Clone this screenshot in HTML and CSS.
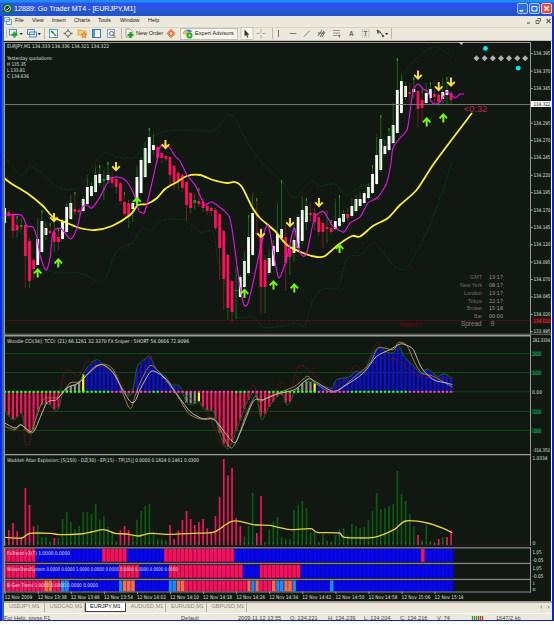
FILE: index.html
```html
<!DOCTYPE html>
<html lang="en">
<head>
<meta charset="utf-8">
<title>12889: Go Trader MT4 - [EURJPY,M1]</title>
<link rel="stylesheet" href="styles.css">
</head>
<body>
<div class="window">
  <header class="title">
    <svg class="logo" width="9" height="9" viewBox="0 0 9 9"><rect width="9" height="9" rx="1" fill="#0b7a2a"/><circle cx="4.5" cy="4.5" r="3" fill="#102818" stroke="#b8e8b0"/><path d="M3 4.5l1.2 1.3L6.3 3.4" stroke="#fff" fill="none"/></svg>
    <span class="title-text">12889: Go Trader MT4 - [EURJPY,M1]</span>
    <div class="win-buttons">
      <svg width="11" height="11" viewBox="0 0 11 11"><rect x=".5" y=".5" width="10" height="10" rx="1.5" fill="#2f6fe0" stroke="#a9c8ff"/><path d="M2.5 7.8h3.5" stroke="#fff" stroke-width="1.6"/></svg>
      <svg width="11" height="11" viewBox="0 0 11 11"><rect x=".5" y=".5" width="10" height="10" rx="1.5" fill="#2f6fe0" stroke="#a9c8ff"/><path d="M3 3.5h5v4.5h-5z" stroke="#fff" fill="none"/></svg>
      <svg width="11" height="11" viewBox="0 0 11 11"><rect x=".5" y=".5" width="10" height="10" rx="1.5" fill="#ee4a35" stroke="#ffc4b8"/><path d="M3.2 3.2l4.6 4.6M7.8 3.2L3.2 7.8" stroke="#fff" stroke-width="1.3"/></svg>
    </div>
  </header>
  <nav class="menu">
    <svg class="doc" width="8" height="8" viewBox="0 0 8 8"><path d="M.5.5h5v4h-5zM2.5 2.5h5v5h-5z" fill="#fff" stroke="#6c9bd6"/></svg>
    <span class="m1">File</span><span class="m2">View</span><span class="m3">Insert</span><span class="m4">Charts</span><span class="m5">Tools</span><span class="m6">Window</span><span class="m7">Help</span>
    <svg class="mdi" width="26" height="8" viewBox="0 0 26 8"><path d="M1 6h3" stroke="#666" stroke-width="1.2"/><path d="M11.5 1.5h3v3M10 3.5h3v3h-3z" stroke="#666" fill="none"/><path d="M20.5 2l4 4M24.5 2l-4 4" stroke="#666" stroke-width="1.2"/></svg>
  </nav>
  <div class="toolbar">
    <svg class="tools-left" width="132" height="13" viewBox="3 0 132 13">
      <path d="M5.5 2v9M43.5 1v11M120.500 1v11" stroke="#bdb9a8"/>
      <rect x="8.500" y="2.500" width="7" height="5.500" fill="#fff" stroke="#5a8ccc"/><path d="M13.500 4.500v6M10.500 7.500h6" stroke="#17a31f" stroke-width="2.200"/><path d="M18.500 6h3.400l-1.700 2zM36.500 6h3.400l-1.700 2z" fill="#222"/>
      <path d="M26.500 2.500h7v5h-7zM28.500 5h7v5h-7z" fill="#dbe9fb" stroke="#5a8ccc"/>
      <rect x="48.500" y="2.500" width="8" height="8" fill="#f6fbff" stroke="#5a9ad6"/><path d="M50 4l3 2.500" stroke="#16a32a" stroke-width="1.700"/><path d="M53 7l2 2" stroke="#e03a2a" stroke-width="1.500"/>
      <circle cx="67" cy="6.500" r="2.500" fill="none" stroke="#777"/><path d="M67 2v2.600M67 8.400V11M62.500 6.500h2.600M69 6.500h2.600" stroke="#777" stroke-width="1.300"/>
      <path d="M77 3h3l1 1h4v4h-8z" fill="#f8d66a" stroke="#c79a2a" stroke-width=".7"/><path d="M83 5l1 2 2 .3-1.500 1.500.4 2-1.900-1-1.900 1 .4-2L80 7.300 82 7z" fill="#ffae2b" stroke="#d8442a" stroke-width=".5"/>
      <rect x="91.500" y="2.500" width="8" height="8" fill="#f2f8ff" stroke="#3a76bc"/><rect x="92" y="3" width="2" height="7" fill="#5a93d6"/>
      <rect x="106.500" y="2.500" width="7" height="8" fill="#e4effa" stroke="#7fa6d2"/><circle cx="110.500" cy="6.500" r="2" fill="#fff" stroke="#667"/><path d="M112 8l2.500 2.500" stroke="#c79a2a" stroke-width="1.200"/>
      <path d="M125 2h4l2 2v6h-6z" fill="#fff" stroke="#777" stroke-width=".7"/><path d="M129.500 5v6M126.500 8h6" stroke="#17a31f" stroke-width="2.200"/>
    </svg>
    <span class="new-order">New Order</span>
    <svg class="alert" width="10" height="11" viewBox="0 0 10 11"><path d="M5 1l4.300 4.500L5 10 .7 5.500z" fill="#f2a565" stroke="#d77a3a" stroke-width=".7"/><circle cx="5" cy="5.500" r="2" fill="#f8e0b0" stroke="#b0402a" stroke-width=".8"/></svg>
    <div class="expert"><svg width="11" height="11" viewBox="0 0 11 11"><path d="M1 6C1 1 9 0 10 4z" fill="#3a86dc"/><path d="M1 5l3-3 4 3-3 3z" fill="#f0c23a"/><circle cx="7.500" cy="7.500" r="3" fill="#19a82c"/><path d="M6.700 5.900v3.200l2.400-1.600z" fill="#fff"/></svg><span>Expert Advisors</span></div>
    <svg class="tools-right" width="155" height="13" viewBox="238 0 155 13">
      <rect x="241" y=".5" width="12" height="12" fill="#f8f6ee" stroke="#bdb9a8" stroke-width=".7"/>
      <path d="M244.500 2.500v7l1.600-1.500 1.400 2.800 1-.6-1.300-2.500h2.200z" fill="#333"/>
      <path d="M261 2v3.500M261 8v3.500M256.500 6.500h3.500M262 6.500h3.500" stroke="#aaa"/>
      <path d="M272.500 1v11M391.500 1v11" stroke="#bdb9a8"/>
      <path d="M278.500 3v7M289.500 6.500h7M304 9.500l6-6" stroke="#777" fill="none"/>
      <path d="M318 9l4-6M320 10l4-6M322 10l3-5M318 6h6" stroke="#666"/><path d="M333 3.500h7M333 6h7M333 8.500h4" stroke="#999"/><path d="M338 8l2.500 0-1.200 3z" fill="#666"/>
      <path d="M362 3h7v7h-7z" fill="none" stroke="#999" stroke-width=".7" stroke-dasharray="1 1"/>
      <text x="349" y="9.200" class="glyph">A</text><text x="363.500" y="9.200" class="glyph">T</text>
      <path d="M377 3l3 1.500-2 2zM380 5l3 4" fill="#555" stroke="#555"/><circle cx="383" cy="9" r="1.200" fill="#555"/><path d="M385 6h3.400l-1.700 2z" fill="#222"/>
    </svg>
  </div>
  <main class="charts">
    <svg id="price" width="548" height="294" viewBox="4 41 548 294"></svg>
    <svg id="cci" width="548" height="119" viewBox="4 335 548 119"></svg>
    <svg id="boom" width="548" height="92.500" viewBox="4 454 548 92.500"></svg>
    <svg id="trend" width="548" height="54" viewBox="4 546.500 548 54"></svg>
  </main>
  <div class="tabs">
    <span>USDJPY,M1</span><span>USDCAD,M1</span><span class="active">EURJPY,M1</span><span>AUDUSD,M1</span><span>EURUSD,M1</span><span>GBPUSD,M1</span>
    <svg width="14" height="8" viewBox="0 0 14 8"><path d="M4 2L2 4l2 2zM10 2l2 2-2 2z" fill="#aaa"/></svg>
  </div>
  <footer class="status">
    <span class="s1">For Help, press F1</span><span class="s2">Default</span><span class="s3">2009.11.12 13:55</span><span class="s4">O: 134.221</span><span class="s5">H: 134.239</span><span class="s6">L: 134.204</span><span class="s7">C: 134.216</span><span class="s8">V: 74</span>
    <svg class="s9" width="13" height="6" viewBox="0 0 13 6"><path d="M1.500 0v6M3.500 0v6M5.500 0v6" stroke="#3d9a2d" stroke-width="1.300"/><path d="M7.500 0v6M9.500 0v6M11.500 0v6" stroke="#a8402c" stroke-width="1.300"/></svg>
    <span class="s10">1647/2 kb</span>
  </footer>
</div>
<script src="charts.js"></script>
</body>
</html>
```
FILE: styles.css
```css
* { box-sizing: border-box; }
body { margin: 0; background: #fff; font-family: "Liberation Sans", Arial, sans-serif; font-size: 5.6px; line-height: 1; color: #333; overflow: hidden; }
svg { display: block; flex: none; }
.window { width: 554px; height: 621px; padding: 0 2px 1px 4px; background: linear-gradient(90deg, #0a28e8 0 2px, #3b6f8e 2px 4px, #0a22e0 4px); display: flex; flex-direction: column; }
.title { height: 15.500px; margin: 0 -2px 0 -4px; padding: 1px 2px 0 3px; display: flex; align-items: center; background: linear-gradient(#1f8cf8 0 2px, #2b52ea 3px 9px, #1c5cb4 13px, #2450d8 15px); color: #fff; }
.title-text { margin-left: 2px; font-size: 7.200px; letter-spacing: -.03px; white-space: nowrap; }
.win-buttons { margin-left: auto; display: flex; gap: 1px; }
.menu { height: 11px; background: #ece9dc; display: flex; align-items: center; font-size: 5.500px; color: #222; }
.menu span { flex: none; }
.doc { margin-right: 3px; }
.m1 { width: 17px; } .m2 { width: 20px; } .m3 { width: 22px; } .m4 { width: 24px; } .m5 { width: 22px; } .m6 { width: 28px; }
.mdi { margin-left: auto; }
.toolbar { height: 14.500px; background: #ece9dc; border-top: 1px solid #d8d4c4; border-bottom: 1px solid #c5c1b0; display: flex; align-items: center; color: #222; }
.new-order { width: 30px; font-size: 5.600px; white-space: nowrap; }
.alert { margin-right: 4px; }
.expert { width: 58px; height: 12px; display: flex; align-items: center; gap: 2px; padding-left: 1px; background: #f6f4ec; border: 1px solid #c5c1b0; font-size: 5.600px; white-space: nowrap; }
.glyph { font-size: 6.500px; font-weight: bold; fill: #666; }
.charts { background: #111811; height: 559.500px; width: 548px; border-right: 1px solid #f4f4f4; overflow: hidden; }
.charts text { font-family: "DejaVu Sans", sans-serif; font-size: 5.100px; fill: #dce0dc; }
.charts .time { fill: #a0a0a0; }
.charts .city { fill: #7a6c74; font-size: 5.400px; font-family: "Liberation Sans", sans-serif; }
.charts .spread { fill: #8a8288; font-size: 7px; font-family: "Liberation Sans", sans-serif; }
.charts .countdown { fill: #c01c50; font-size: 9px; font-family: "Liberation Sans", sans-serif; }
.charts .level { fill: #24b838; }
.charts .now { fill: #111; }
.charts .warn { fill: #e84040; }
.charts .dim { fill: #6a0018; font-weight: bold; }
.charts .small { font-size: 4.400px; }
.tabs { height: 12px; flex: none; background: #ece9dc; border-top: 2px solid #aaa69a; display: flex; align-items: flex-start; color: #8b887c; font-size: 5.600px; }
.tabs span { width: 40.500px; height: 9px; padding: 1.500px 0 0 5px; border-right: 1px solid #b4b0a2; white-space: nowrap; }
.tabs .active { background: #fff; color: #111; border: 1px solid #444; border-top: 0; padding-left: 4px; }
.tabs svg { margin-left: auto; }
.status { flex: 1; background: #ece9dc; border-top: 1px solid #fff; display: flex; overflow: hidden; padding-top: 2px; font-size: 5.600px; color: #444; white-space: nowrap; }
.status > * { flex: none; }
.s1 { width: 177px; } .s2 { width: 57px; } .s3 { width: 52px; } .s4 { width: 38px; } .s5 { width: 36px; } .s6 { width: 36px; } .s7 { width: 37px; } .s8 { width: 34px; }
.s9 { margin-right: 12px; }
```
FILE: charts.js
```js
const NS = "http://www.w3.org/2000/svg";
const barX = i => 4.67 + 4.133 * i;

function el(svg, name, attrs, text) {
  const n = document.createElementNS(NS, name);
  for (const k in attrs) n.setAttribute(k, attrs[k]);
  if (text !== undefined) n.textContent = text;
  svg.appendChild(n);
  return n;
}
const rect = (s, x, y, w, h, fill) => el(s, "rect", { x, y, width: w, height: h, fill });
const line = (s, pts, stroke, w, dash) => el(s, "polyline", { points: pts, fill: "none", stroke, "stroke-width": w || 1, "stroke-dasharray": dash || "none", "stroke-linejoin": "round" });
const label = (s, x, y, w, t, cls) => el(s, "text", { x, y, textLength: w, lengthAdjust: "spacingAndGlyphs", class: cls || "" }, t);
const pairs = str => str.trim().split(/\s+/).map(p => p.split(",").map(Number));
const third = (str, y0) => pairs(str).map(([x, y]) => [x / 3, y0 + y / 3]);
function at(pts, x) {
  if (x <= pts[0][0]) return pts[0][1];
  for (let i = 1; i < pts.length; i++) {
    if (x <= pts[i][0]) {
      const a = pts[i - 1], b = pts[i];
      return a[1] + (b[1] - a[1]) * (x - a[0]) / (b[0] - a[0]);
    }
  }
  return pts[pts.length - 1][1];
}
/* cardinal spline through the points */
function curve(s, p, stroke, w, dash) {
  const k = 0.14;
  let d = `M${p[0]}`;
  for (let i = 0; i < p.length - 1; i++) {
    const a = p[Math.max(0, i - 1)], b = p[i], c = p[i + 1], e = p[Math.min(p.length - 1, i + 2)];
    d += `C${b[0] + (c[0] - a[0]) * k},${b[1] + (c[1] - a[1]) * k} ${c[0] - (e[0] - b[0]) * k},${c[1] - (e[1] - b[1]) * k} ${c}`;
  }
  el(s, "path", { d, fill: "none", stroke, "stroke-width": w, "stroke-dasharray": dash || "none" });
}

/* price panel */
const P = document.getElementById("price");
curve(P, pairs("5,157 21,175 30,167 40,172 60,188 80,187 95,163 105,153 117,157 135,157 147,140 163,132 185,130 212,131 220,125 228,115 235,119 250,147 267,168 283,183 290,195 297,197 310,181 320,186 335,184 346,195 360,187 375,178 393,123 403,77 417,58 433,47 443,50 452,58"), "#0b3a1a", 1, "2 1");
curve(P, pairs("5,230 22,233 30,262 47,270 60,273 80,273 103,281 117,251 132,243 142,228 150,231 163,220 185,220 200,232 213,232 218,260 230,300 237,317 253,317 263,327 277,327 295,323 305,325 313,300 323,289 338,287 347,258 360,255 373,243 383,253 397,268 407,267 427,232 443,190 452,162"), "#0b3a1a", 1, "2 1");
line(P, "4,320.500 530,320.500", "#5a0a1c", 1, "3 1");
/* high, bodyTop, bodyBottom, low, kind (w = up, r = down, g = doji) */
const candles = `207,208,223,224,w 210,212,216,218,r 214,215,231,239,r 216,225,230,237,r 218,225,227,230,g 222,225,256,288,r 238,241,281,288,r 258,260,269,280,r 218,239,265,266,w 210,221,252,253,w
222,228,235,240,w 223,231,233,234,r 213,232,242,252,r 228,237,242,250,r 219,222,239,240,w 203,207,232,233,w 195,203,219,220,w 192,209,212,215,r 208,210,212,215,r 196,199,211,212,w
175,187,204,205,w 182,186,196,197,w 165,175,192,193,w 165,174,183,186,w 170,179,181,200,g 162,175,180,184,w 171,177,183,187,r 175,179,187,193,r 182,183,201,204,r 192,202,214,216,r
200,203,217,228,r 200,203,209,222,w 166,177,202,203,w 157,160,193,194,w 142,148,177,178,w 128,137,163,164,w 132,145,150,155,w 145,147,158,163,r 151,153,158,163,r 155,156,159,161,r
156,157,175,185,r 165,166,182,190,r 171,173,180,190,r 173,175,188,192,r 181,182,205,220,r 192,193,208,213,r 193,200,203,210,g 188,201,204,207,r 198,202,208,212,r 203,206,211,215,r
206,208,211,216,r 208,210,228,230,r 213,214,248,280,r 230,231,279,310,r 254,255,308,320,r 280,281,312,323,r 267,290,291,319,g 275,277,297,298,w 250,261,287,288,w 215,237,273,275,w
192,213,255,256,w 198,233,234,236,r 228,236,287,313,r 255,260,287,313,r 250,258,273,275,w 240,246,266,267,w 202,234,252,254,w 180,229,238,240,w 225,237,263,291,r 244,248,257,275,r
220,240,253,262,w 214,217,248,250,w 196,210,241,244,w 198,206,222,230,w 202,213,215,222,r 208,213,222,230,r 215,217,232,236,r 220,223,232,248,r 210,227,229,243,r 220,228,232,234,r
199,221,229,231,w 195,218,226,228,w 210,214,222,224,w 208,214,218,221,r 198,206,216,218,w 195,199,211,213,w 193,199,206,208,w 191,193,203,205,w 183,187,198,200,w 165,174,193,194,w
134,155,184,185,w 115,139,170,172,w 140,146,154,156,w 128,136,150,152,w 103,125,143,145,w 58,90,133,134,w 72,81,113,114,w 82,86,97,100,w 83,92,94,103,r 77,89,92,98,w
90,91,109,127,r 90,100,108,122,r 83,93,103,105,w 82,89,98,102,w 90,94,97,104,r 94,95,102,106,r 78,92,99,105,w 77,90,95,105,w 91,93,100,104,r`.trim().split(/\s+/);
candles.forEach((c, i) => {
  const [h, t, b, l, k] = c.split(",");
  const x = barX(i);
  rect(P, x - 0.5, +h, 1, l - h, k === "r" ? (i % 3 ? "#7a1c20" : "#16601c") : "#16661c");
  const w = t - h > 6;
  if (w) rect(P, x - 0.5, +h, 1, 3, i % 2 ? "#2f9a28" : "#5a1418");
  rect(P, x - 1.4, +t, 2.8, b - t, { w: "#fff", r: "#ff0f5c", g: "#1f8a1f" }[k]);
  if (i % 3 === 1 && k === "w") rect(P, x - 1, +t + 1, 1, Math.max(0, b - t - 2), "#8fe08a");
});
curve(P, pairs("4,178 12,184 27,193 43,206 53,217 67,223 80,228 95,230 112,226 130,215 138,205 147,204 157,198 165,189 177,182 187,176 200,175 213,180 227,183 235,182 242,187 252,207 260,218 275,231 287,245 303,253 317,257 325,256 338,245 352,236 360,236.500 373,226 388,218 400,205 417,189.500 435,162 472,113"), "#fff02a", 1.8);
curve(P, pairs("5,215 21,215 27,226 33,227 37,238 40,255 46,270 50,258 53,233 60,228 65,233 71,239 77,228 82,208 87,205 92,208 100,197 104,189 110,179 115,177 122,178 127,182 132,190 136,200 139,211 143,213 145,211 151,187 157,160 160,147 165,144 170,148 175,156 180,161 187,175 195,185 202,200 205,205 212,202 223,210 229,216 232,229 235,250 240,287 244,305 248,303 253,283 260,250 266,227 269,228 273,250 278,276 281,275 287,257 294,228 298,247 303,256 307,252 312,228 315,217 319,213 324,212 332,225 337,229 344,232 350,223 360,217 368,203 377,198 383,190 387,182 391,163 393,148 400,138 407,130 410,112 413,92 418,84 423,89 428,92 431,101 435,104 440,102 447,92 455,98 460,94 464,94"), "#ee10ee", 1.1);
line(P, "4,104.500 530,104.500", "#6d7472");
const down = pairs("54,213 116,162 165.500,140 261,229 290,218 319,198 418,70.500 438.700,82 451,77.500");
const up = pairs("37.700,268 58.300,258 137,196.500 244.500,288.500 273.500,280 294.300,283 339.500,243.500 426.700,117 443.300,113");
down.forEach(([x, y]) => el(P, "path", { d: `M${x} ${y}v8M${x - 3.7} ${y + 4.4}l3.700 3.800 3.700-3.800`, stroke: "#ffe23a", "stroke-width": 1.9, fill: "none" }));
up.forEach(([x, y]) => el(P, "path", { d: `M${x} ${y + 9.5}v-8M${x - 3.7} ${y + 5.4}l3.700-4 3.700 4`, stroke: "#72f80c", "stroke-width": 2, fill: "none" }));
label(P, 7, 48.3, 102, "EURJPY,M1  134.333 134.336 134.321 134.322");
label(P, 7, 60.2, 46, "Yesterday quotations:");
label(P, 7, 66.2, 19, "H 135.35");
label(P, 7, 72.2, 18, "L 133.81");
label(P, 7, 78.2, 22, "C 134.636");
label(P, 464, 112, 23, "<0:32", "countdown");
el(P, "circle", { cx: 485.5, cy: 48.4, r: 2.4, fill: "#00e8ff" });
el(P, "circle", { cx: 518.2, cy: 68.2, r: 2.4, fill: "#00e8ff" });
[476.5, 484.6, 492.8, 501, 509, 517.3, 525.2].forEach(x => el(P, "path", { d: `M${x - 3} 58.300l3-3 3 3-3 3z`, fill: "#b0b0b0" }));
[["GMT", 470, "13:17"], ["New York", 460, "08:17"], ["London", 464, "13:17"], ["Tokyo", 468, "22:17"], ["Broker", 467, "15:18"], ["Bar", 474, "00:00"]].forEach(([n, x, v], i) => {
  const y = 279.3 + i * 7.75;
  label(P, x, y, 482 - x, n, "city");
  label(P, 489, y, 14, v, "time");
});
label(P, 461, 326, 20.5, "Spread", "spread");
label(P, 490.5, 326, 4, "9", "time spread");
label(P, 399, 325.7, 23, "Support 1", "dim");
rect(P, 530, 42, 1, 293, "#9a9a96");
for (let i = 0; i < 17; i++) {
  const y = 53.2 + i * 17.37;
  rect(P, 530, y, 3, 1, "#9a9a96");
  if (i !== 3) label(P, 533.5, y + 2, 17, (134.395 - i * 0.025).toFixed(3));
}
rect(P, 531, 101, 20.5, 6, "#fff");
label(P, 533.5, 106, 17, "134.322", "now");
rect(P, 532, 317.5, 19, 6, "#4a0c0c");
label(P, 533.5, 322.5, 17, "134.010", "warn");
rect(P, 4, 42, 527, 1, "#9a9a96");
rect(P, 4, 42, 1, 293, "#9a9a96");
rect(P, 4, 333.7, 548, 1, "#77776f");
el(P, "path", { d: "M458.500 42h5.500l-2.700 3z", fill: "#c8c8c0" });

/* CCI panel */
const C = document.getElementById("cci");
[353.5, 372.5, 391.8, 411.5, 430.5].forEach(y => line(C, `4,${y} 530,${y}`, "#0d4a1a", 0.9));
const cci = third("14,235 40,260 65,240 76,290 90,302 100,295 112,235 128,212 150,215 168,235 180,215 188,180 205,160 235,150 260,105 290,80 315,100 345,125 365,165 388,190 400,165 412,100 435,78 450,72 470,110 497,130 515,155 540,160 560,210 585,212 598,205 615,230 640,235 655,290 675,342 690,342 710,290 740,210 760,175 770,190 785,260 805,225 842,180 860,215 872,205 884,175 912,145 927,145 972,160 997,165 1009,140 1047,132 1067,115 1092,115 1122,55 1142,42 1162,58 1182,58 1195,35 1212,70 1242,100 1262,120 1282,108 1312,130 1332,122 1357,137", 333);
const hue = z => z < 188 ? "#ff1260" : z < 244 ? "#8a908a" : z < 256 ? "#ffff20" : z < 372 ? "#0808ff" : z < 395 ? "#35403a" : z < 548 ? "#0808ff" : z < 593 ? "#8a908a" : z < 604 ? "#ffff20" : z < 878 ? "#ff1260" : z < 940 ? "#8a908a" : z < 952 ? "#ffff20" : "#0808ff";
for (let i = 0; i < 109; i++) {
  const x = barX(i), y = at(cci, x);
  rect(C, x - 1.1, Math.min(y, 392), 2.2, Math.abs(y - 392), hue(x * 3));
}
curve(C, third("14,235 40,265 65,245 75,325 88,330 112,240 165,230 190,130 205,110 235,130 262,85 300,100 345,115 375,175 395,170 415,120 450,62 465,105 540,175 620,235 670,340 720,260 760,155 785,250 810,210 835,155 850,150 870,180 890,110 912,100 990,165 1040,135 1065,98 1095,110 1130,30 1160,75 1190,80 1260,130 1357,135", 333), "#6e1020", 1, "2 1");
curve(C, cci, "#126a1c", 1);
curve(C, third("14,280 45,290 65,275 90,300 105,265 130,200 155,195 180,190 210,150 240,145 285,100 320,95 345,120 388,225 405,190 420,150 450,98 480,120 530,185 565,240 600,258 645,260 695,345 740,240 765,190 780,205 810,190 835,180 884,160 922,130 945,150 1000,178 1060,135 1110,90 1135,45 1180,50 1195,28 1220,37 1245,90 1265,120 1300,130 1357,162", 333), "#a87838", 1);
curve(C, third("14,270 45,285 62,275 90,295 105,290 140,210 170,200 200,165 235,150 290,100 315,98 340,120 365,165 390,205 405,205 420,170 450,118 470,118 500,140 525,175 570,235 610,258 645,262 700,328 720,300 760,205 790,200 835,182 884,170 924,138 950,148 1000,175 1040,155 1090,120 1130,70 1170,50 1200,33 1220,37 1240,50 1265,105 1300,140 1340,150 1357,155", 333), "#c8c8c0", 0.9);
for (let i = 0; i < 109; i++) {
  const z = barX(i) * 3;
  const pink = (z > 325 && z < 450) || (z > 480 && z < 700) || (z > 735 && z < 800) || (z > 948 && z < 1050) || z > 1222;
  rect(C, barX(i) - 1, 390.8, 2.3, 2, pink ? "#ff40b0" : "#30ff30");
}
label(C, 7, 343.2, 182, "Woodie CCI(34), TCCI: (21) 66.1261 32.3370  FX Sniper : SHORT 54.0666 72.9096");
rect(C, 530, 336, 1, 118, "#9a9a96");
rect(C, 4, 336, 1, 118, "#9a9a96");
rect(C, 4, 335, 527, 1.5, "#9a9a96");
label(C, 532.5, 341.8, 17.5, "282.3334");
[[353.5, "200"], [372.5, "100"], [411.5, "-100"], [430.5, "-200"]].forEach(([y, t]) => {
  rect(C, 531.5, y - 2.7, 10, 5.4, "#0c3c2c");
  label(C, 532, y + 2, 9, t, "level");
});
label(C, 532, 393.8, 10, "0.00");
label(C, 532.5, 451.8, 17.5, "-314.350");

/* explosion panel */
const B = document.getElementById("boom");
const tops = [262,231,210,235,255,105,156,220,216,252,252,265,255,255,198,177,207,228,219,177,177,183,153,200,190,222,235,263,232,219,232,247,200,174,159,153,235,258,258,262,216,258,232,201,174,198,216,207,198,226,235,189,132,18,67,45,195,219,250,219,120,240,129,268,231,207,192,252,258,258,171,156,144,165,237,237,268,243,262,268,247,229,226,247,213,219,225,222,201,174,120,168,165,159,154,54,123,144,183,220,246,262,216,264,270,258,252,252,232];
const reds = new Set([0,1,2,3,4,5,6,7,12,28,29,30,40,41,42,43,44,45,46,47,48,49,50,51,52,53,54,55,56,57,61,62,100,104,105,107,108]);
tops.forEach((t, i) => {
  const y = 453 + t / 3, x = barX(i);
  rect(B, x - 0.8, y, 1.7, 545 - y, reds.has(i) ? "#f01458" : "#0c5a12");
  rect(B, x - 0.5, 542.3, 1, 1.5, i % 3 ? "#208a3c" : "#2860a0");
});
line(B, "4,545.700 530,545.700", "#5a1c24", 0.8, "1 1");
curve(B, third("14,253 65,255 90,241 150,241 180,245 240,243 275,237 312,230 345,241 380,243 415,249 450,241 510,244 580,241 640,238 670,220 695,205 720,205 760,215 810,217 835,223 872,230 932,227 952,238 1017,240 1034,253 1122,253 1182,230 1217,204 1282,210 1332,227 1357,240", 453), "#e6d23c", 1.3);
label(B, 7, 461.5, 192, "Waddah Attar Explosion: [S(150) - DZ(30) - EP(15) - TP(15)] 0.0000 0.1824 0.1461 0.0300");
rect(B, 4, 454, 527, 1.3, "#9a9a96");
rect(B, 4, 454, 1, 92, "#9a9a96");
rect(B, 530, 454, 1, 92, "#9a9a96");
label(B, 532.5, 460, 15, "1.0334");
label(B, 532.5, 544.5, 3, "0");

/* trend strips: colour code and right edge of each run */
const T = document.getElementById("trend");
const tint = { r: "#f8105c", b: "#0404f6", c: "#ff6a50", l: "#2088ff" };
const strips = [
  [548.3, 13, "r107 b306 r381 b492 r703 b1263 r1275 b1360"],
  [564.3, 13, "r107 b357 r418 b507 r729 b779 r902 b1360"],
  [580, 11, "r132 c157 r182 l207 b357 l368 c405 b506 l530 c555 r742 c754 l767 c779 r816 c829 l853 c878 l889 b990 l1002 b1360"]
];
strips.forEach(([y, h, runs]) => {
  let x = 14;
  runs.split(" ").forEach(r => {
    const e = +r.slice(1);
    rect(T, x / 3, y, (e - x) / 3, h, tint[r[0]]);
    x = e;
  });
  for (let i = 0; i < 109; i++) el(T, "rect", { x: barX(i) + 1.9, y, width: 0.6, height: h, fill: "#141030", opacity: 0.7 });
});
[546.7, 562.3, 578.3].forEach(y => rect(T, 4, y, 527, 1.3, "#85858a"));
rect(T, 4, 591, 527, 1, "#85858a");
rect(T, 4, 547, 1, 45, "#9a9a96");
rect(T, 530, 547, 1, 45, "#9a9a96");
label(T, 7, 554.3, 63, "FxTrend v3(7) 1.0000 0.0000");
label(T, 7, 570.3, 171, "WildanTrendSystem 0.0000 0.0000 1.0000 0.0000 0.0000 0.0000 0.0000 0.0000 0.0000");
label(T, 7, 586.3, 91, "B-Gen Trend 1.0000 0.0000 0.0000 0.0000");
label(T, 532.5, 553, 9, "1.05");
label(T, 532.5, 561.5, 11, "-0.05");
label(T, 532.5, 569, 9, "1.05");
label(T, 532.5, 577.5, 11, "-0.05");
label(T, 532.5, 584.7, 2.5, "1", "small");
label(T, 532.5, 590.3, 3, "0", "small");
["12 Nov 2009", "12 Nov 13:38", "12 Nov 13:46", "12 Nov 13:54", "12 Nov 14:02", "12 Nov 14:10", "12 Nov 14:18", "12 Nov 14:26", "12 Nov 14:34", "12 Nov 14:42", "12 Nov 14:50", "12 Nov 14:58", "12 Nov 15:06", "12 Nov 15:14"].forEach((t, i) => {
  const x = 4.7 + i * 33.07;
  rect(T, x, 591, 1, 2.5, "#9a9a96");
  label(T, x, 598.3, i ? 29 : 27.5, t);
});
```
